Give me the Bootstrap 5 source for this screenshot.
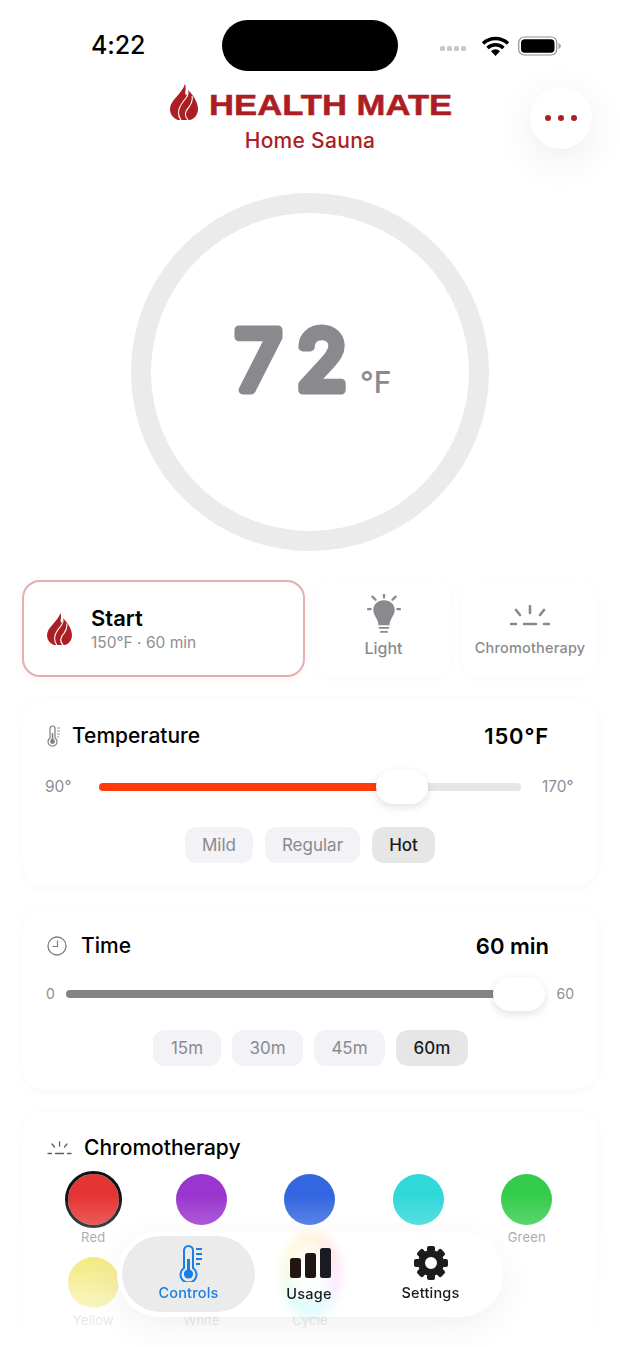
<!DOCTYPE html>
<html lang="en">
<head>
    <meta charset="UTF-8">
    <meta name="viewport" content="width=device-width, initial-scale=1.0">
    <title>Health Mate Home Sauna</title>
    <link rel="stylesheet" href="https://cdn.jsdelivr.net/npm/bootstrap@5.3.0/dist/css/bootstrap.min.css">
    <style>
        html, body { height: 1347px; overflow: hidden; background: #fff; }
        body { font-family: Inter, "Liberation Sans", sans-serif; color: #000; position: relative; }
        .phone-page { width: 620px; height: 1347px; overflow: hidden; }

        .status-row { height: 71px; padding-top: 20px; }
        .status-time { width: 222px; padding-left: 91px; font-size: 25px; font-weight: 500; line-height: 51px; letter-spacing: -.1px; }
        .island { width: 176px; height: 51px; border-radius: 26px; background: #000; }
        .status-icons { margin-left: 42px; height: 51px; }
        .signal-dots { gap: 2px; margin-top: 6px; margin-right: 15px; }
        .signal-dots i { width: 5px; height: 5px; background: #c9c9c9; border-radius: 1.5px; }

        .brand { margin-top: 13px; height: 36px; color: #ab1e24; }
        .brand-name { width: 242px; margin-left: 11px; height: 36px; font-family: "Liberation Sans", sans-serif; font-weight: 700; font-size: 29px; line-height: 42px; white-space: nowrap; -webkit-text-stroke: .5px #ab1e24; transform: scaleX(1.195); transform-origin: left center; }
        .brand-sub { margin-top: 9px; color: #ab1e24; font-size: 21px; font-weight: 500; line-height: 23px; text-align: center; letter-spacing: .3px; }
        .more-btn { position: absolute; left: 530px; top: 87px; width: 62px; height: 62px; border-radius: 50%; background: #fff; border: 0; box-shadow: 0 10px 40px rgba(0,0,0,.08); gap: 7px; }
        .more-btn i { width: 6px; height: 6px; border-radius: 50%; background: #ab1e24; }

        .temp-ring { width: 358px; height: 358px; margin: 41px auto 0; border: 20px solid #ebebeb; border-radius: 50%; position: relative; }
        .ring-text { overflow: visible; }

        .action-row { margin: 29px 22px 0; gap: 11px; height: 97px; }
        .action-tile { background: #fff; border-radius: 17px; box-shadow: 0 2px 10px rgba(0,0,0,.025); border: 0; color: #8a8a8e; }
        .tile-start { width: 283px; border: 2px solid #e5aeb1; border-radius: 18px; padding-left: 23px; gap: 19px; box-shadow: 0 2px 8px rgba(171,30,36,.05); }
        .tile-light { width: 135px; padding-top: 14px; }
        .tile-chromo { width: 136px; padding-top: 25px; }
        .start-title { font-size: 22px; font-weight: 600; color: #000; line-height: 26px; }
        .start-sub { font-size: 15.5px; color: #8e8e93; line-height: 20px; margin-top: 2px; }
        .tile-label { font-size: 16px; font-weight: 500; line-height: 20px; margin-top: 3px; }
        .tile-chromo .tile-label { font-size: 14.5px; letter-spacing: .2px; margin-top: 11px; }

        .panel { margin: 0 23px; border: 0; border-radius: 19px; box-shadow: 0 2px 12px rgba(0,0,0,.035); background: #fff; }
        .panel-title { font-size: 21px; font-weight: 500; line-height: 26px; }
        .panel-value { font-size: 22px; font-weight: 600; line-height: 26px; }
        .value-wide { letter-spacing: .8px; }
        .panel-temp { margin-top: 22px; height: 186px; padding: 24px 48px 0 24px; }
        .panel-time { margin-top: 23px; height: 181px; padding: 25px 48px 0 24px; }
        .panel-chromo { margin-top: 23px; height: 300px; padding: 23px 16px 0 16px; }

        .range-label { font-size: 15.5px; color: #8e8e93; line-height: 20px; }
        .slider-row { position: relative; }
        .slide-track { height: 8px; border-radius: 4px; background: #e6e6e6; position: relative; }
        .slide-fill { height: 8px; border-radius: 4px 0 0 4px; }
        .slide-thumb { position: absolute; top: -13px; width: 52px; height: 34px; border-radius: 17px; background: #fff; box-shadow: 0 3px 9px rgba(0,0,0,.12); }

        .preset-row { gap: 12px; }
        .preset-btn { height: 36px; padding: 0; border: 0; border-radius: 12px; background: #f2f2f7; color: #8a8a8e; font-size: 17px; line-height: 36px; }
        .preset-btn.is-on { background: #e6e6e6; color: #1c1c1e; font-weight: 500; }

        .swatch-grid { display: grid; grid-template-columns: repeat(5, 1fr); row-gap: 11px; margin-top: 13px; }
        .swatch-dot { width: 51px; height: 51px; border-radius: 50%; }
        .swatch-on { outline: 3px solid #111; }
        .swatch-name { font-size: 13px; color: #8e8e93; line-height: 18px; margin-top: 3px; letter-spacing: .2px; }

        .bottom-fade { position: absolute; left: 0; right: 0; top: 1195px; height: 152px; background: linear-gradient(to bottom, rgba(255,255,255,0), rgba(255,255,255,.96)); }
        .tab-bar { position: absolute; left: 117px; top: 1231px; width: 386px; height: 86px; padding: 5px; border-radius: 43px; background: rgba(255,255,255,.95); -webkit-backdrop-filter: blur(18px); backdrop-filter: blur(18px); box-shadow: 0 10px 36px rgba(0,0,0,.06); }
        .tab-item { height: 76px; border-radius: 38px; font-size: 14.5px; font-weight: 500; color: #1c1c1e; padding-top: 1px; letter-spacing: .2px; }
        .tab-on { width: 133px; background: #ebebeb; color: #1a7fe0; }
        .tab-usage { width: 108px; position: relative; }
        .tab-usage > * { position: relative; }
        .tab-usage::before { content: ""; position: absolute; left: 26px; top: -5px; width: 60px; height: 86px; border-radius: 50%; background: radial-gradient(closest-side, #fff 45%, rgba(255,255,255,0) 85%), conic-gradient(#ffd040, #ff6090, #ff70f0, #70e0ff, #40f0e0, #a0f080, #ffe060, #ffd040); opacity: .2; filter: blur(5px); }
        .tab-settings { width: 135px; }
        .tab-icon-therm { margin-left: 4px; }
        .tab-icon-bars { margin: 4px 0 3px 4px; }
        .tab-icon-gear { margin-bottom: 2px; }
    </style>
</head>
<body>
<div class="phone-page">
    <div class="status-row d-flex">
        <div class="status-time">4:22</div>
        <div class="island"></div>
        <div class="status-icons d-flex align-items-center">
            <div class="signal-dots d-flex"><i></i><i></i><i></i><i></i></div>
            <svg width="29" height="20" viewBox="0 0 29 20">
                <path d="M2 7.500a18 18 0 0 1 25 0M6.500 12a11.500 11.500 0 0 1 16 0" fill="none" stroke="#000" stroke-width="3.400"/>
                <path d="M10 15.200a6.400 6.400 0 0 1 9 0L14.500 20z" fill="#000"/>
            </svg>
            <svg width="44" height="20" viewBox="0 0 44 20" class="ms-2">
                <rect x=".75" y="1" width="38" height="18" rx="5.500" fill="none" stroke="#8f8f8f" stroke-width="1.200"/>
                <rect x="3" y="3.200" width="33.500" height="13.600" rx="3.800" fill="#000"/>
                <path d="M40.500 7v6c1.500-.4 2.400-1.600 2.400-3s-.9-2.600-2.400-3z" fill="#a5a5a5"/>
            </svg>
        </div>
    </div>

    <div class="brand d-flex justify-content-center">
        <svg width="28" height="36" viewBox="0 0 28 36">
            <path d="M15 0c2 5-1 9 1 11 2-1 2-3 2-5 5 5 10 12 10 19 0 6-4 10-8 11H8c-5-2-8-6-8-11C0 16 12 10 15 0z" fill="#ab1e24"/>
            <path d="M11 36C5 28 11 20 16 14c3-4 2-8 0-11M18 36c-4-4-3-9 1-13 3-4 4-7 3-11" fill="none" stroke="#fff" stroke-width="1.100"/>
        </svg>
        <div class="brand-name">HEALTH MATE</div>
    </div>
    <div class="brand-sub">Home Sauna</div>
    <button type="button" class="more-btn d-flex align-items-center justify-content-center"><i></i><i></i><i></i></button>

    <div class="temp-ring d-flex align-items-center justify-content-center">
        <svg class="ring-text" width="190" height="110" viewBox="0 0 190 110" font-family="Inter, sans-serif" fill="#8a8a8e">
            <text x="20" y="73" font-size="83" font-weight="400" stroke="#8a8a8e" stroke-width="9" stroke-linejoin="round" stroke-linecap="round" textLength="112" lengthAdjust="spacing">72</text>
            <text x="145" y="76" font-size="30" font-weight="500">°F</text>
        </svg>
    </div>

    <div class="action-row d-flex">
        <div class="action-tile tile-start d-flex align-items-center">
            <svg width="25" height="32" viewBox="0 0 28 36">
                <path d="M15 0c2 5-1 9 1 11 2-1 2-3 2-5 5 5 10 12 10 19 0 6-4 10-8 11H8c-5-2-8-6-8-11C0 16 12 10 15 0z" fill="#ab1e24"/>
                <path d="M11 36C5 28 11 20 16 14c3-4 2-8 0-11M18 36c-4-4-3-9 1-13 3-4 4-7 3-11" fill="none" stroke="#fff" stroke-width="1.200"/>
            </svg>
            <div>
                <div class="start-title">Start</div>
                <div class="start-sub">150°F · 60 min</div>
            </div>
        </div>
        <div class="action-tile tile-light d-flex flex-column align-items-center">
            <svg width="34" height="41" viewBox="0 0 38 46">
                <path d="M19 0v4M6 3l3.500 3.500M32 3l-3.500 3.500M1 17h3M34 17h3" stroke="#8a8a8e" stroke-width="2.600" stroke-linecap="round" fill="none"/>
                <path d="M19 7c-7.500 0-12 5-12 11 0 6 5 9 6 17h12c1-8 6-11 6-17 0-6-4.500-11-12-11z" fill="#8a8a8e"/>
                <path d="M14 38h10M15.500 42.500h7" stroke="#8a8a8e" stroke-width="2" stroke-linecap="round"/>
            </svg>
            <div class="tile-label">Light</div>
        </div>
        <div class="action-tile tile-chromo d-flex flex-column align-items-center">
            <svg width="40" height="22" viewBox="0 0 40 22">
                <path d="M20 1v7M6 5l4 5M34 5l-4 5M1 19h5M14 19h12M34 19h5" stroke="#8a8a8e" stroke-width="2.600" stroke-linecap="round" fill="none"/>
            </svg>
            <div class="tile-label">Chromotherapy</div>
        </div>
    </div>

    <div class="card panel panel-temp">
        <div class="d-flex align-items-center">
            <svg width="13" height="22" viewBox="0 0 13 22" class="me-2">
                <path d="M3 3.500a2.500 2.500 0 0 1 5 0v9.500a4.500 4.500 0 1 1-5 0z" fill="none" stroke="#7d7d82" stroke-width="1.200"/>
                <circle cx="5.500" cy="16.500" r="2.400" fill="#7d7d82"/>
                <path d="M5.500 8v8" stroke="#7d7d82" stroke-width="1.500"/>
                <path d="M10 3h3M10 6h3M10 9h3M10 12h2" stroke="#9a9a9e" stroke-width="1"/>
            </svg>
            <div class="panel-title ms-1 flex-grow-1">Temperature</div>
            <div class="panel-value value-wide">150°F</div>
        </div>
        <div class="slider-row d-flex align-items-center" style="margin-top: 28px; margin-left: -2px; margin-right: -26px;">
            <div class="range-label" style="width: 54px;">90°</div>
            <div class="slide-track" style="width: 422px;">
                <div class="slide-fill" style="width: 278px; background: #ff3b0a;"></div>
                <div class="slide-thumb" style="left: 277px;"></div>
            </div>
            <div class="range-label" style="margin-left: 21px;">170°</div>
        </div>
        <div class="preset-row d-flex" style="margin-top: 30px; margin-left: 138px;">
            <button type="button" class="btn preset-btn" style="width: 68px;">Mild</button>
            <button type="button" class="btn preset-btn" style="width: 95px;">Regular</button>
            <button type="button" class="btn preset-btn is-on" style="width: 63px;">Hot</button>
        </div>
    </div>

    <div class="card panel panel-time">
        <div class="d-flex align-items-center">
            <svg width="20" height="20" viewBox="0 0 20 20" style="margin-right: 14px;">
                <circle cx="10" cy="10" r="9" fill="none" stroke="#7d7d82" stroke-width="1.300"/>
                <path d="M10.500 4.500v6H5.500" fill="none" stroke="#7d7d82" stroke-width="1.200"/>
            </svg>
            <div class="panel-title flex-grow-1">Time</div>
            <div class="panel-value">60 min</div>
        </div>
        <div class="slider-row d-flex align-items-center" style="margin-top: 25px; margin-left: -1px; margin-right: -25px;">
            <div class="range-label" style="width: 20px; font-size: 14px;">0</div>
            <div class="slide-track" style="width: 479px;">
                <div class="slide-fill" style="width: 440px; background: #848488;"></div>
                <div class="slide-thumb" style="left: 427px;"></div>
            </div>
            <div class="range-label" style="margin-left: 12px; font-size: 14px;">60</div>
        </div>
        <div class="preset-row d-flex" style="margin-top: 26px; margin-left: 106px; gap: 11px;">
            <button type="button" class="btn preset-btn" style="width: 68px;">15m</button>
            <button type="button" class="btn preset-btn" style="width: 71px;">30m</button>
            <button type="button" class="btn preset-btn" style="width: 71px;">45m</button>
            <button type="button" class="btn preset-btn is-on" style="width: 72px;">60m</button>
        </div>
    </div>

    <div class="card panel panel-chromo">
        <div class="d-flex align-items-center" style="padding-left: 8px;">
            <svg width="25" height="14" viewBox="0 0 25 14" class="me-2">
                <path d="M12.500 1v4M5 3l2.500 3M20 3l-2.500 3M1 12.500h3.500M8.500 12.500h8M20.500 12.500h3.500" stroke="#54606a" stroke-width="1.300" stroke-linecap="round" fill="none"/>
            </svg>
            <div class="panel-title ms-1">Chromotherapy</div>
        </div>
        <div class="swatch-grid text-center">
            <div class="d-flex flex-column align-items-center"><div class="swatch-dot swatch-on" style="background: #e63434;"></div><div class="swatch-name">Red</div></div>
            <div class="d-flex flex-column align-items-center"><div class="swatch-dot" style="background: #9a35cf;"></div><div class="swatch-name">Purple</div></div>
            <div class="d-flex flex-column align-items-center"><div class="swatch-dot" style="background: #3366e0;"></div><div class="swatch-name">Blue</div></div>
            <div class="d-flex flex-column align-items-center"><div class="swatch-dot" style="background: #30d8da;"></div><div class="swatch-name">Cyan</div></div>
            <div class="d-flex flex-column align-items-center"><div class="swatch-dot" style="background: #35cc4c;"></div><div class="swatch-name">Green</div></div>
            <div class="d-flex flex-column align-items-center"><div class="swatch-dot" style="background: #ecdc30;"></div><div class="swatch-name">Yellow</div></div>
            <div class="d-flex flex-column align-items-center"><div class="swatch-dot" style="background: #f6f6f6;"></div><div class="swatch-name">White</div></div>
            <div class="d-flex flex-column align-items-center"><div class="swatch-dot" style="background: conic-gradient(#ff2020, #ffe020, #20e060, #20e0e0, #2060ff, #ff20e0, #ff2020);"></div><div class="swatch-name">Cycle</div></div>
        </div>
    </div>
</div>

<div class="bottom-fade"></div>

<div class="tab-bar d-flex">
    <div class="tab-item tab-on d-flex flex-column align-items-center justify-content-center">
        <svg class="tab-icon-therm" width="26" height="37" viewBox="0 0 26 37">
            <path d="M6 5.500a4.500 4.500 0 0 1 9 0v17.500a8 8 0 1 1-9 0z" fill="none" stroke="#1a7fe0" stroke-width="2"/>
            <circle cx="10.500" cy="29" r="4.600" fill="#1a7fe0"/>
            <path d="M10.500 14v14" stroke="#1a7fe0" stroke-width="3"/>
            <path d="M18 4h6M18 9h6M18 14h6M18 19h4" stroke="#1a7fe0" stroke-width="1.800"/>
        </svg>
        <div>Controls</div>
    </div>
    <div class="tab-item tab-usage d-flex flex-column align-items-center justify-content-center">
        <svg class="tab-icon-bars" width="42" height="32" viewBox="0 0 42 32">
            <rect x="0" y="10" width="11" height="20" rx="2.500" fill="#1f1512"/>
            <rect x="15" y="5" width="11" height="25" rx="2.500" fill="#1f1512"/>
            <rect x="30" y="0" width="11" height="30" rx="2.500" fill="#1c1a22"/>
        </svg>
        <div>Usage</div>
    </div>
    <div class="tab-item tab-settings d-flex flex-column align-items-center justify-content-center">
        <svg class="tab-icon-gear" width="34" height="34" viewBox="-17 -17 34 34">
            <circle r="9.500" fill="none" stroke="#1c1c1e" stroke-width="7"/>
            <g fill="#1c1c1e">
                <rect x="-4" y="-17" width="8" height="6" rx="2"/>
                <rect x="-4" y="-17" width="8" height="6" rx="2" transform="rotate(45)"/>
                <rect x="-4" y="-17" width="8" height="6" rx="2" transform="rotate(90)"/>
                <rect x="-4" y="-17" width="8" height="6" rx="2" transform="rotate(135)"/>
                <rect x="-4" y="-17" width="8" height="6" rx="2" transform="rotate(180)"/>
                <rect x="-4" y="-17" width="8" height="6" rx="2" transform="rotate(225)"/>
                <rect x="-4" y="-17" width="8" height="6" rx="2" transform="rotate(270)"/>
                <rect x="-4" y="-17" width="8" height="6" rx="2" transform="rotate(315)"/>
            </g>
        </svg>
        <div>Settings</div>
    </div>
</div>

<script src="https://cdn.jsdelivr.net/npm/bootstrap@5.3.0/dist/js/bootstrap.bundle.min.js"></script>
</body>
</html>
